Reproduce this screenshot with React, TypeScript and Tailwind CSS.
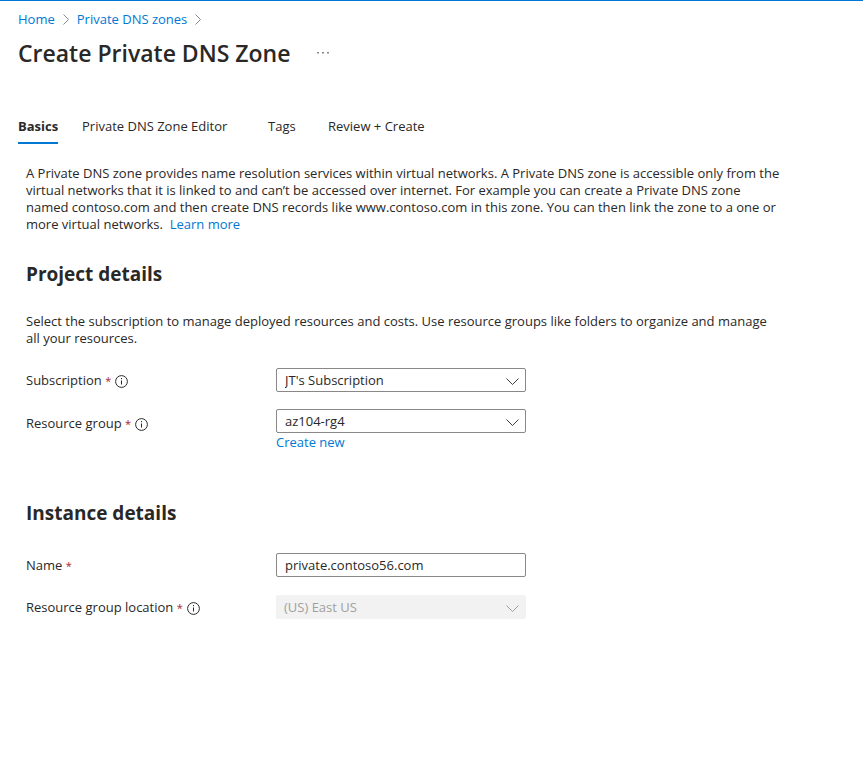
import type { ReactNode } from 'react';

function Separator() {
  return (
    <svg aria-hidden="true" width="6" height="11" viewBox="0 0 6 11" fill="none" stroke="#8a8886" className="mt-px shrink-0">
      <path d="M0.5 0.5 L5.5 5.5 L0.5 10.5" />
    </svg>
  );
}

function InfoIcon() {
  return (
    <svg role="img" aria-label="More information" width="13" height="13" viewBox="0 0 13 13" fill="none" stroke="#292827" className="mt-[3px] shrink-0">
      <circle cx="6.5" cy="6.5" r="5.9" />
      <path d="M6.5 5.5 V9.5 M6.5 3 V4.2" />
    </svg>
  );
}

function FieldLabel({ htmlFor, info, children }: { htmlFor: string; info?: boolean; children: ReactNode }) {
  return (
    <div className="flex h-6 w-[250px] shrink-0 items-center">
      <label htmlFor={htmlFor} className="mr-1">
        {children} <span className="text-[11px] text-[#a4262c]">*</span>
      </label>
      {info && <InfoIcon />}
    </div>
  );
}

function SelectBox({ id, value, disabled }: { id: string; value: string; disabled?: boolean }) {
  return (
    <div className="relative">
      <select
        id={id}
        disabled={disabled}
        defaultValue={value}
        className="block h-6 w-full appearance-none rounded-xs border border-[#8a8886] bg-white pr-7 pl-2 text-[#292827] disabled:border-[#f2f2f2] disabled:bg-[#f2f2f2] disabled:pl-[7px] disabled:text-[#a19f9d] disabled:opacity-100"
      >
        <option>{value}</option>
      </select>
      <svg
        aria-hidden="true"
        width="13"
        height="7"
        viewBox="0 0 13 7"
        fill="none"
        stroke={disabled ? '#a19f9d' : '#403f3e'}
        className="pointer-events-none absolute top-[10px] right-[7px]"
      >
        <path d="M0.5 0.5 L6.5 6.5 L12.5 0.5" />
      </svg>
    </div>
  );
}

export default function App() {
  return (
    <div className="min-h-screen border-t border-[#0078d4] bg-white font-['Open_Sans','Noto_Sans',sans-serif] text-[13px] leading-[17px] text-[#292827]">
      <header className="px-[18px] pt-2">
        <nav aria-label="Breadcrumb" className="flex h-5 items-center gap-2 text-[#0078d4]">
          <a href="#home">Home</a>
          <Separator />
          <a href="#zones">Private DNS zones</a>
          <Separator />
        </nav>
        <div className="mt-2 flex h-8 items-center gap-[26px]">
          <h1 className="text-[23px] leading-8 font-semibold">Create Private DNS Zone</h1>
          <button type="button" aria-label="More actions">
            <svg width="12" height="2" viewBox="0 0 12 2" fill="#8a8886">
              <rect x="0" y="0" width="2" height="1.5" />
              <rect x="5" y="0" width="2" height="1.5" />
              <rect x="10" y="0" width="2" height="1.5" />
            </svg>
          </button>
        </div>
        <div role="tablist" className="mt-[47px] flex items-start">
          <button type="button" role="tab" aria-selected="true" className="mr-6 h-7 w-10 border-b-2 border-[#0078d4] pb-1.5 text-left font-bold whitespace-nowrap">
            Basics
          </button>
          <button type="button" role="tab" aria-selected="false" className="h-5 w-[186px] text-left">Private DNS Zone Editor</button>
          <button type="button" role="tab" aria-selected="false" className="h-5 w-[60px] text-left">Tags</button>
          <button type="button" role="tab" aria-selected="false" className="h-5 text-left">Review + Create</button>
        </div>
      </header>

      <main className="max-w-[808px] px-[26px] pt-[21px]">
        <p>
          A Private DNS zone provides name resolution services within virtual networks. A Private DNS zone is accessible only from the
          virtual networks that it is linked to and can’t be accessed over internet. For example you can create a Private DNS zone
          named contoso.com and then create DNS records like www.contoso.com in this zone. You can then link the zone to a one or
          more virtual networks.&nbsp; <a href="#learn" className="text-[#0078d4]">Learn more</a>
        </p>

        <section>
          <h2 className="mt-[27px] text-[19px] leading-7 font-bold">Project details</h2>
          <p className="mt-[25px]">
            Select the subscription to manage deployed resources and costs. Use resource groups like folders to organize and manage
            all your resources.
          </p>
          <div className="mt-[21px] flex">
            <FieldLabel htmlFor="subscription" info>Subscription</FieldLabel>
            <div className="w-[250px]">
              <SelectBox id="subscription" value="JT's Subscription" />
            </div>
          </div>
          <div className="mt-[17px] flex h-[25px]">
            <div className="pt-0.5">
              <FieldLabel htmlFor="group" info>Resource group</FieldLabel>
            </div>
            <div className="w-[250px]">
              <SelectBox id="group" value="az104-rg4" />
            </div>
          </div>
          <button type="button" className="ml-[250px] block h-[17px] text-[#0078d4]">Create new</button>
        </section>

        <section>
          <h2 className="mt-12 text-[19px] leading-7 font-bold">Instance details</h2>
          <div className="mt-[26px] flex">
            <FieldLabel htmlFor="name">Name</FieldLabel>
            <input id="name" type="text" defaultValue="private.contoso56.com" className="h-6 w-[250px] rounded-xs border border-[#8a8886] px-2" />
          </div>
          <div className="mt-[18px] flex">
            <FieldLabel htmlFor="location" info>Resource group location</FieldLabel>
            <div className="w-[250px]">
              <SelectBox id="location" value="(US) East US" disabled />
            </div>
          </div>
        </section>
      </main>
    </div>
  );
}
